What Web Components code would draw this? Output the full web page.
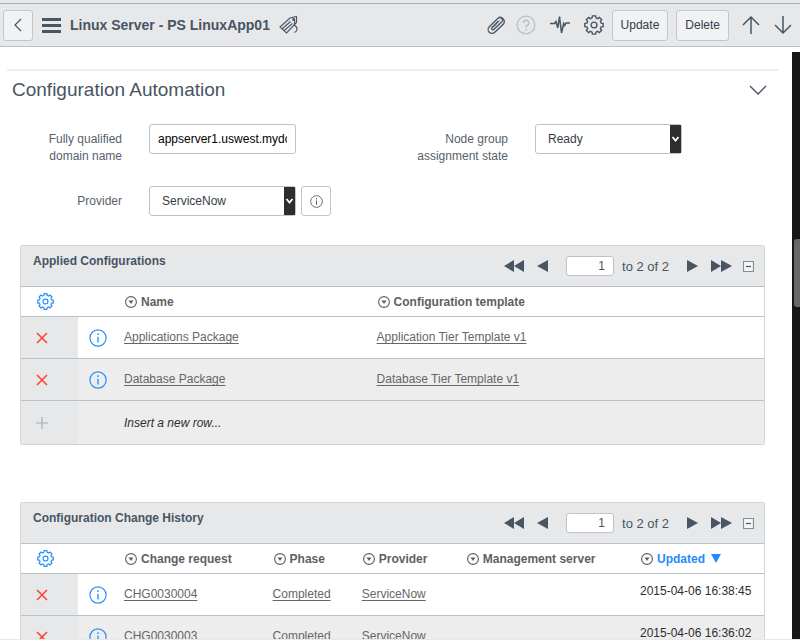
<!DOCTYPE html>
<html lang="en">
<head>
<meta charset="utf-8">
<title>Linux Server - PS LinuxApp01</title>
<style>
  body { margin: 0; background: #fff; color: #485563; font: 12px/17px "Liberation Sans", Arial, sans-serif; }
</style>
</head>
<body>
<record-page></record-page>
<script>
const gearPath = (() => {
  // Eight-toothed cog outline centred in a 20x20 box.
  let d = '';
  for (let i = 0; i < 8; i++) {
    const a = i * 45;
    [[a - 10, 9.3], [a + 10, 9.3], [a + 15, 7.4], [a + 30, 7.4]].forEach(([deg, r], k) => {
      const t = (deg - 90) * Math.PI / 180;
      d += (i || k ? 'L' : 'M') + (10 + r * Math.cos(t)).toFixed(2) + ' ' + (10 + r * Math.sin(t)).toFixed(2);
    });
  }
  return d + 'Z';
})();

const ICONS = {
  back: [18, 18, '<path d="M12 3 6 9l6 6"/>'],
  menu: [19, 16, '<path d="M0 2.500h19M0 8.500h19M0 14.500h19" stroke-width="3"/>'],
  tags: [20, 20, '<path d="M1 12 11 3l6.500-1.500v6L7.500 18zM3.500 13.500l8-7M5.300 15.500l8-7M15 4.500c1.500 1 .5 4 0 5.500 1.500 1 3.500 2 3 4.500-.3 1.600-1.500 2.500-2.500 3" stroke-width="1.100"/><circle cx="14.700" cy="4.500" r=".9" fill="currentColor"/>'],
  clip: [20, 20, '<path d="M12.500 6 6 12.500a1.300 1.300 0 0 0 2 1.800L15.700 7a2.600 2.600 0 0 0-3.700-3.700L3.300 11.700a3.900 3.900 0 0 0 5.500 5.600L17.500 9a4.400 4.400 0 0 0-5.300-6.500" stroke-width="1.300"/><path d="M13.800 5.500 7 12.500" stroke-width=".9"/>'],
  help: [20, 20, '<circle cx="10" cy="10" r="8.900" stroke-width="1.400"/><path d="M7.400 8a2.700 2.700 0 1 1 4 2.300c-1 .6-1.400 1-1.400 2.200M10 14v1.600" stroke-width="1.600"/>'],
  pulse: [20, 20, '<path d="M0 8.500h4.500L6 6.500 7.800 13 9.500 1.500 11.500 18l2.200-9.500 1 2L16 8h4" stroke-width="1.500"/>'],
  gear: [20, 20, `<path d="${gearPath}" stroke-width="1.400"/><circle cx="10" cy="10" r="2.900" stroke-width="1.400"/>`],
  up: [18, 20, '<path d="M9 19V2M1 10l8-8 8 8" stroke-width="1.500"/>'],
  down: [18, 20, '<path d="M9 1v17M1 10l8 8 8-8" stroke-width="1.500"/>'],
  chevron: [18, 10, '<path d="m1 1 8 8 8-8" stroke-width="1.400"/>'],
  caret: [9, 6, '<path d="m1.500 1 3 3.500 3-3.500" stroke-width="1.800"/>'],
  info: [20, 20, '<circle cx="10" cy="10" r="9" stroke-width="1.300"/><path d="M10 8.500V15M10 4.800v2" stroke-width="1.500"/>'],
  remove: [12, 12, '<path d="m1 1 10 10M11 1 1 11" stroke-width="1.500"/>'],
  add: [12, 12, '<path d="M6 0v12M0 6h12"/>'],
  columnMenu: [12, 12, '<circle cx="6" cy="6" r="5.400" stroke-width="1.100"/><path d="M3.500 4.500h5L6 8z" fill="currentColor" stroke="none"/>'],
  first: [20, 12, '<path d="M10 0v12L0 6zM20 0v12L10 6z" fill="currentColor" stroke="none"/>'],
  previous: [11, 12, '<path d="M11 0v12L0 6z" fill="currentColor" stroke="none"/>'],
  next: [11, 12, '<path d="M0 0v12l11-6z" fill="currentColor" stroke="none"/>'],
  last: [21, 12, '<path d="M0 0v12l10-6zM10 0v12l11-6z" fill="currentColor" stroke="none"/>'],
  collapse: [11, 11, '<path d="M.5.5h10v10H.5z" fill="#f4f5f6" stroke="#8a8d90"/><path d="M3 5.500h5" stroke="#485563"/>'],
  sorted: [10, 10, '<path d="M0 0h10L5 9z" fill="currentColor" stroke="none"/>']
};

class UiIcon extends HTMLElement {
  connectedCallback() {
    if (this.shadowRoot) return;
    const [w, h, body] = ICONS[this.getAttribute('name')];
    const size = Number(this.getAttribute('size')) || w;
    this.attachShadow({ mode: 'open' }).innerHTML = `
      <style>:host { display: inline-flex; flex: none; vertical-align: middle; } svg { display: block; }</style>
      <svg width="${size}" height="${Math.round(size * h / w)}" viewBox="0 0 ${w} ${h}" fill="none"
        stroke="currentColor" stroke-width="1.200" aria-hidden="true">${body}</svg>`;
  }
}
customElements.define('ui-icon', UiIcon);

class IconButton extends HTMLElement {
  connectedCallback() {
    if (this.shadowRoot) return;
    const size = this.getAttribute('size');
    this.attachShadow({ mode: 'open' }).innerHTML = `
      <style>
        :host { display: inline-flex; flex: none; }
        button { display: flex; align-items: center; justify-content: center; padding: 0; border: 0;
          background: none; color: inherit; cursor: pointer; }
        :host([boxed]) button { box-sizing: border-box; width: 30px; height: var(--box-height, 30px);
          border: 1px solid #c3c7ca; border-radius: 3px; background: var(--box-fill, #fff); }
      </style>
      <button type="button" aria-label="${this.getAttribute('label')}">
        <ui-icon name="${this.getAttribute('icon')}" ${size ? `size="${size}"` : ''}></ui-icon>
      </button>`;
  }
}
customElements.define('icon-button', IconButton);

class ActionButton extends HTMLElement {
  connectedCallback() {
    if (this.shadowRoot) return;
    this.attachShadow({ mode: 'open' }).innerHTML = `
      <style>
        :host { display: inline-flex; }
        button { height: 31px; padding: 0 8px; border: 1px solid #c3c7ca; border-radius: 3px;
          background: #f1f2f4; color: #343d47; font: inherit; cursor: pointer; }
      </style>
      <button type="button"><slot></slot></button>`;
  }
}
customElements.define('action-button', ActionButton);

class RecordHeader extends HTMLElement {
  connectedCallback() {
    if (this.shadowRoot) return;
    this.attachShadow({ mode: 'open' }).innerHTML = `
      <style>
        :host { display: block; flex: none; border-top: 3px solid #e6e8ea; background: #e6e8ea; }
        header { display: flex; align-items: center; justify-content: space-between; height: 42px;
          padding: 0 8px 0 3px; border-top: 1px solid #a9b0b6; border-bottom: 1px solid #bdc0c4;
          --box-fill: #f1f2f4; --box-height: 31px; }
        .group { display: flex; align-items: center; gap: 9px; }
        .tools { gap: 8px; }
        .tools > div { display: flex; align-items: center; gap: 8px; }
        .tools .icons { gap: 14px; }
        .arrows { padding-left: 5px; }
        .clip { display: flex; gap: 10px; }
        .muted { color: #bdc0c4; }
        h1 { margin: 0; font-size: 14px; line-height: 20px; font-weight: bold; }
      </style>
      <header>
        <div class="group">
          <icon-button boxed icon="back" label="Back"></icon-button>
          <icon-button icon="menu" label="Additional actions"></icon-button>
          <h1><slot></slot></h1>
          <icon-button icon="tags" label="Tags"></icon-button>
        </div>
        <div class="group tools">
          <div class="icons">
            <span class="clip">
              <icon-button icon="clip" label="Attachments"></icon-button>
              <icon-button class="muted" icon="help" label="Help"></icon-button>
            </span>
            <icon-button icon="pulse" label="Activity"></icon-button>
            <icon-button icon="gear" label="Settings"></icon-button>
          </div>
          <div>
            <action-button>Update</action-button>
            <action-button>Delete</action-button>
          </div>
          <div class="icons arrows">
            <icon-button icon="up" label="Previous record"></icon-button>
            <icon-button icon="down" label="Next record"></icon-button>
          </div>
        </div>
      </header>`;
  }
}
customElements.define('record-header', RecordHeader);

class FormField extends HTMLElement {
  connectedCallback() {
    if (this.shadowRoot) return;
    const value = this.getAttribute('value');
    const control = this.getAttribute('type') === 'select'
      ? `<select id="control"><option>${value}</option></select><span class="arrow"><ui-icon name="caret"></ui-icon></span>`
      : `<input id="control" type="text" value="${value}">`;
    this.attachShadow({ mode: 'open' }).innerHTML = `
      <style>
        :host { display: grid; grid-template-columns: 102px auto 1fr; align-items: start; }
        label { padding-top: 7px; text-align: right; color: #58616b; }
        .control { display: grid; width: 147px; margin-left: 27px; }
        input, select, .arrow { grid-area: 1 / 1; }
        input, select { box-sizing: border-box; width: 100%; height: 30px; margin: 0; border: 1px solid #bfc3c7;
          border-radius: 3px; background: #fff; font: inherit; appearance: none; }
        input { padding: 0 8px; color: #000; }
        select { padding: 0 12px; color: #343d47; }
        .arrow { display: flex; align-items: center; justify-content: center; justify-self: end; width: 11px;
          margin: 1px; background: #2e2e2e; color: #fff; pointer-events: none; }
        slot { display: block; padding-left: 5px; }
      </style>
      <label for="control">${this.getAttribute('label')}</label>
      <div class="control">${control}</div>
      <slot></slot>`;
  }
}
customElements.define('form-field', FormField);

class FormSection extends HTMLElement {
  connectedCallback() {
    if (this.shadowRoot) return;
    this.attachShadow({ mode: 'open' }).innerHTML = `
      <style>
        :host { display: block; }
        .head { display: flex; align-items: center; justify-content: space-between; margin: 0 14px 0 7px;
          padding: 7px 11px 0 5px; border-top: 2px solid #efefef; }
        h2 { margin: 0; font-size: 19px; line-height: 24px; font-weight: normal; }
        .fields { display: grid; grid-template-columns: 1fr 1fr; row-gap: 21px; padding: 22px 0 0 20px; }
      </style>
      <div class="head">
        <h2><slot name="title"></slot></h2>
        <icon-button icon="chevron" label="Collapse section"></icon-button>
      </div>
      <div class="fields"><slot></slot></div>`;
  }
}
customElements.define('form-section', FormSection);

class ListPager extends HTMLElement {
  connectedCallback() {
    if (this.shadowRoot) return;
    this.attachShadow({ mode: 'open' }).innerHTML = `
      <style>
        :host, div { display: flex; align-items: center; }
        :host { gap: 18px; }
        .arrows { gap: 13px; }
        .count { gap: 8px; font-size: 13px; }
        .end { gap: 11px; }
        input { box-sizing: border-box; width: 48px; height: 20px; margin: 0; padding: 0 8px; border: 1px solid #bfc3c7;
          border-radius: 3px; background: #fff; color: #485563; font: inherit; font-size: 12px; text-align: right; }
      </style>
      <div class="arrows">
        <icon-button icon="first" label="First page"></icon-button>
        <icon-button icon="previous" label="Previous page"></icon-button>
      </div>
      <div class="count"><input type="text" value="1" aria-label="Row"><span>to 2 of 2</span></div>
      <div class="arrows">
        <icon-button icon="next" label="Next page"></icon-button>
        <div class="end">
          <icon-button icon="last" label="Last page"></icon-button>
          <icon-button icon="collapse" label="Collapse list"></icon-button>
        </div>
      </div>`;
  }
}
customElements.define('list-pager', ListPager);

const LISTS = {
  applied: {
    columns: [{ label: 'Name', width: '34%' }, { label: 'Configuration template' }],
    rows: [['Applications Package', 'Application Tier Template v1'], ['Database Package', 'Database Tier Template v1']],
    insert: true
  },
  history: {
    columns: [{ label: 'Change request', width: '20%' }, { label: 'Phase', width: '12%' },
      { label: 'Provider', width: '14%' }, { label: 'Management server' },
      { label: 'Updated', width: '124px', sorted: true, plain: true }],
    rows: [['CHG0030004', 'Completed', 'ServiceNow', '', '2015-04-06 16:38:45'],
      ['CHG0030003', 'Completed', 'ServiceNow', '', '2015-04-06 16:36:02']]
  }
};

class RelatedList extends HTMLElement {
  connectedCallback() {
    if (this.shadowRoot) return;
    const { columns, rows, insert } = LISTS[this.getAttribute('source')];
    const head = columns.map(c => `<th scope="col" class="text ${c.sorted ? 'sorted' : ''}"><span>
      <icon-button icon="columnMenu" label="${c.label} options"></icon-button>${c.label}${c.sorted ? '<ui-icon name="sorted"></ui-icon>' : ''}</span></th>`).join('');
    const cell = (text, c) => c.plain ? `<td class="plain">${text}</td>` : `<td>${text && `<a href="#">${text}</a>`}</td>`;
    const body = rows.map(r => `<tr>
      <td class="act"><icon-button class="remove" icon="remove" label="Delete row"></icon-button></td>
      <td class="info"><icon-button icon="info" size="18" label="Preview record"></icon-button></td>
      ${r.map((t, i) => cell(t, columns[i])).join('')}</tr>`).join('');
    const last = insert ? `<tr class="insert"><td class="act"><icon-button icon="add" label="Add row"></icon-button></td>
      <td></td><td colspan="${columns.length}">Insert a new row...</td></tr>` : '';
    this.attachShadow({ mode: 'open' }).innerHTML = `
      <style>
        :host { display: block; margin: 0 27px 0 20px; border: 1px solid #d2d5d8; border-radius: 2px; }
        .bar { display: flex; align-items: flex-start; justify-content: space-between; background: #e6e8ea; padding: 7px 10px 0 12px;
          height: 33px; border-bottom: 1px solid #bdc0c4; }
        h3 { margin: 0; font-size: 12px; line-height: 17px; }
        list-pager { padding-top: 3px; }
        table { width: 100%; table-layout: fixed; border-collapse: separate; border-spacing: 0; }
        th, td { box-sizing: border-box; padding: 0; border-bottom: 1px solid #bdc0c4; text-align: left; vertical-align: middle; }
        td { height: 42px; }
        th { height: 30px; color: #5f5f5f; white-space: nowrap; }
        th.text { padding: 1px 0 0 1px; }
        th span { display: flex; align-items: center; gap: 4px; }
        th.sorted { color: #1f8bff; }
        th.sorted icon-button { color: #5f5f5f; }
        th ui-icon { padding-left: 2px; }
        th.tools { padding-left: 16px; color: #278efc; }
        th icon-button, td icon-button { vertical-align: middle; }
        tbody tr:nth-child(even), .insert { background: #ededed; }
        .insert td { height: 43px; padding-top: 1px; font-style: italic; color: #2e2e2e; border: 0; }
        tbody .act { padding-left: 15px; background: #e6e8ea; color: #a9adb1; }
        td.info { padding-left: 11px; color: #278efc; }
        td icon-button.remove { color: #ff402c; }
        td.plain { padding-bottom: 6px; color: #2e2e2e; white-space: nowrap; }
        a { color: #666; text-underline-offset: 2px; }
      </style>
      <div class="bar"><h3><slot></slot></h3><list-pager></list-pager></div>
      <table>
        <colgroup><col style="width:57px"><col style="width:46px">${columns.map(c => `<col${c.width ? ` style="width:${c.width}"` : ''}>`).join('')}</colgroup>
        <thead><tr><th class="tools"><icon-button icon="gear" size="17" label="Personalize list"></icon-button></th><th></th>${head}</tr></thead>
        <tbody>${body}${last}</tbody>
      </table>`;
  }
}
customElements.define('related-list', RelatedList);

class ScrollTrack extends HTMLElement {
  connectedCallback() {
    if (this.shadowRoot) return;
    this.attachShadow({ mode: 'open' }).innerHTML = `
      <style>
        :host { display: grid; grid-template-rows: 187fr 68fr 332fr; flex: none; width: 8px; margin-top: 5px; background: #171717; }
        span { grid-row: 2; margin-left: 2px; border-radius: 3px 0 0 3px; background: #686868; }
      </style><span></span>`;
  }
}
customElements.define('scroll-track', ScrollTrack);

class RecordPage extends HTMLElement {
  connectedCallback() {
    if (this.shadowRoot) return;
    this.attachShadow({ mode: 'open' }).innerHTML = `
      <style>
        :host { display: flex; flex-direction: column; height: 100vh; }
        .body { display: flex; flex: 1; min-height: 0; border-bottom: 1px solid #e6e8ea; }
        main { flex: 1; min-width: 0; overflow-y: auto; scrollbar-width: none; padding-top: 22px; }
        related-list { margin-top: 29px; }
        related-list + related-list { margin-top: 57px; }
      </style>
      <record-header>Linux Server - PS LinuxApp01</record-header>
      <div class="body">
        <main>
          <form-section>
            <span slot="title">Configuration Automation</span>
            <form-field label="Fully qualified domain name" value="appserver1.uswest.mydomain.com"></form-field>
            <form-field type="select" label="Node group assignment state" value="Ready"></form-field>
            <form-field type="select" label="Provider" value="ServiceNow">
              <icon-button boxed icon="info" size="13" label="Provider details"></icon-button>
            </form-field>
          </form-section>
          <related-list source="applied">Applied Configurations</related-list>
          <related-list source="history">Configuration Change History</related-list>
        </main>
        <scroll-track></scroll-track>
      </div>`;
  }
}
customElements.define('record-page', RecordPage);
</script>
</body>
</html>
